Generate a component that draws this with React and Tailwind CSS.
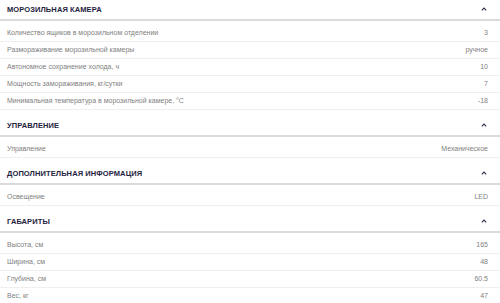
const sections = [
  {
    title: "МОРОЗИЛЬНАЯ КАМЕРА",
    rows: [
      ["Количество ящиков в морозильном отделении", "3"],
      ["Размораживание морозильной камеры", "ручное"],
      ["Автономное сохранение холода, ч", "10"],
      ["Мощность замораживания, кг/сутки", "7"],
      ["Минимальная температура в морозильной камере, °С", "-18"],
    ],
  },
  {
    title: "УПРАВЛЕНИЕ",
    rows: [["Управление", "Механическое"]],
  },
  {
    title: "ДОПОЛНИТЕЛЬНАЯ ИНФОРМАЦИЯ",
    rows: [["Освещение", "LED"]],
  },
  {
    title: "ГАБАРИТЫ",
    rows: [
      ["Высота, см", "165"],
      ["Ширина, см", "48"],
      ["Глубина, см", "60.5"],
      ["Вес, кг", "47"],
    ],
  },
];

function Chevron() {
  return (
    <svg width="6" height="4" viewBox="0 0 6 4" className="text-[#2a2f45]">
      <polyline points="0.8,3.3 3,1 5.2,3.3" fill="none" stroke="currentColor" strokeWidth="1.1" />
    </svg>
  );
}

function Section({ title, rows }) {
  return (
    <div>
      <div className="flex h-[27px] items-end justify-between border-b-2 border-[#dadada] pb-[6px] pl-[7px] pr-[13px]">
        <span className="text-[7.5px] font-bold leading-none tracking-[0.1px] text-[#1e2340]">{title}</span>
        <span className="mb-[2px]"><Chevron /></span>
      </div>
      <div className="pt-[4px]">
        {rows.map(([label, value]) => (
          <div key={label} className="flex h-[17px] items-center justify-between border-b border-[#efefef] pl-[7px] pr-[12px] text-[7px] text-[#808080]">
            <span>{label}</span>
            <span>{value}</span>
          </div>
        ))}
      </div>
    </div>
  );
}

export default function App() {
  return (
    <div className="h-[303px] w-[500px] overflow-hidden bg-white" style={{ fontFamily: '"Liberation Sans", Arial, sans-serif' }}>
      <div className="-mt-[6px]">
        {sections.map((s) => (
          <Section key={s.title} title={s.title} rows={s.rows} />
        ))}
      </div>
    </div>
  );
}
